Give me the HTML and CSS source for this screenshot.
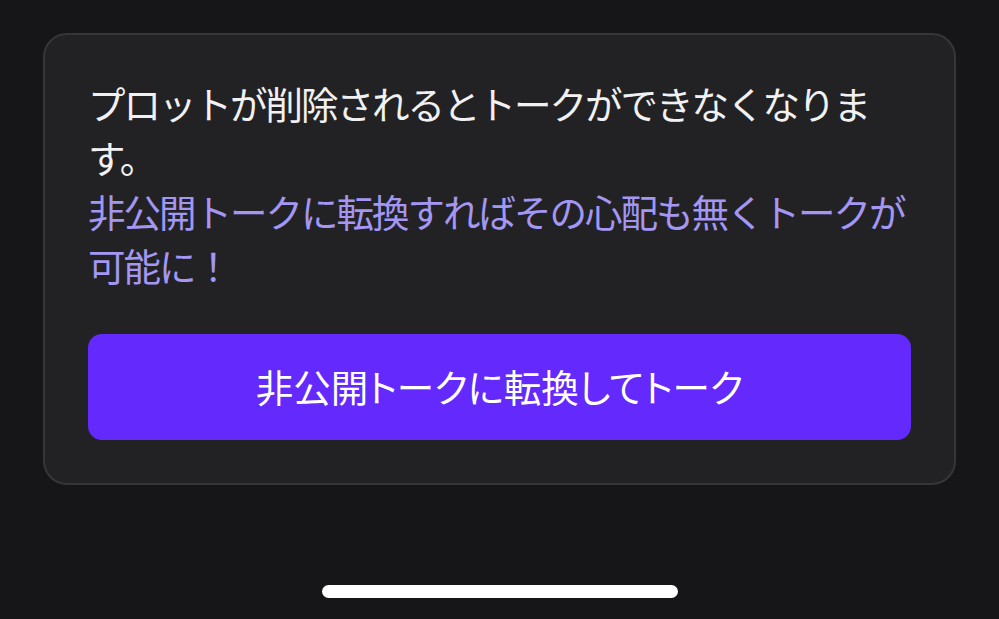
FILE: index.html
```html
<!DOCTYPE html>
<html lang="ja">
<head>
<meta charset="utf-8">
<title>トーク</title>
<link rel="stylesheet" href="styles.css">
</head>
<body>
<div class="screen">
  <section class="notice">
    <p class="notice-text">プロットが削除されるとトークができなくなります。<br><span class="notice-hint">非公開トークに転換すればその心配も無くトークが可能に！</span></p>
    <button class="convert-btn" type="button">非公開トークに転換してトーク</button>
  </section>
  <div class="home-indicator"></div>
</div>
</body>
</html>
```

FILE: styles.css
```css
* { box-sizing: border-box; }

html, body {
  margin: 0;
  padding: 0;
  background: #161618;
}

.screen {
  width: 999px;
  height: 619px;
  display: flex;
  flex-direction: column;
  align-items: center;
  font-family: "Noto Sans CJK JP", "Noto Sans", sans-serif;
}

.notice {
  margin-top: 33px;
  width: 913px;
  background: #222224;
  border: 2px solid #363638;
  border-radius: 24px;
  padding: 41px 43px 43px 43px;
  display: flex;
  flex-direction: column;
  gap: 42px;
}

.notice-text {
  margin: 0;
  font-size: 37.5px;
  letter-spacing: -2px;
  line-height: 54px;
  color: #f1f1f3;
}

.notice-hint {
  color: #a397f3;
}

.convert-btn {
  height: 106px;
  width: 100%;
  border: none;
  border-radius: 14px;
  background: #6329fd;
  color: #ffffff;
  font-family: inherit;
  font-feature-settings: "palt";
  font-size: 37.5px;
  padding: 0 0 4px 0;
}

.home-indicator {
  margin-top: auto;
  margin-bottom: 21px;
  width: 356px;
  height: 13px;
  border-radius: 7px;
  background: #ffffff;
}
```
